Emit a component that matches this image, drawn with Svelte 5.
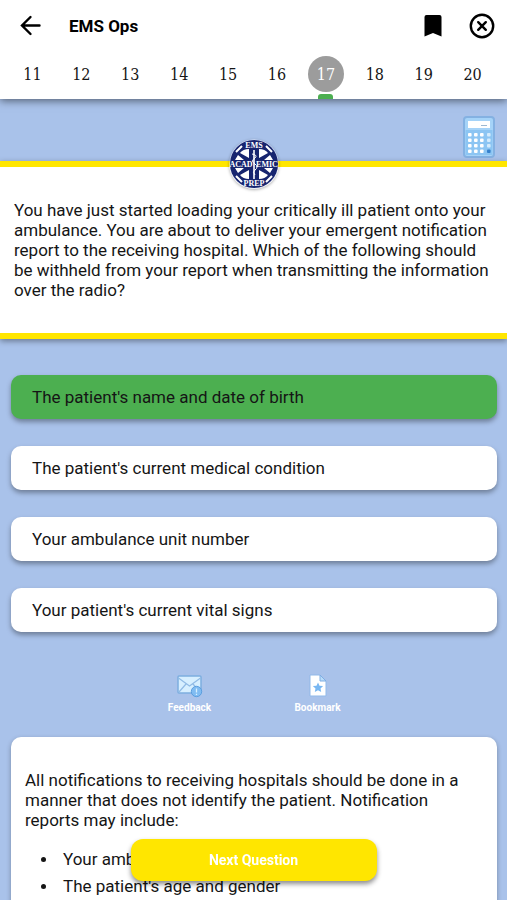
<script>
	const questions = [11, 12, 13, 14, 15, 16, 17, 18, 19, 20];

	const answers = [
		"The patient's name and date of birth",
		"The patient's current medical condition",
		"Your ambulance unit number",
		"Your patient's current vital signs",
	];

	const correct = 0;
	let current = $state(17);
	let selected = $state(0);

	function next() {
		if (current < questions[questions.length - 1]) current += 1;
	}
</script>

<div class="screen">
	<header>
		<div class="bar">
			<button class="icon-btn" aria-label="Back">
				<svg width="24" height="24" viewBox="0 0 24 24" class="line">
					<path d="M21.5 11.5H4M12.5 3L4 11.5L12.5 20" />
				</svg>
			</button>
			<h1>EMS Ops</h1>
			<button class="icon-btn" aria-label="Bookmark this question">
				<svg width="24" height="24" viewBox="0 0 24 24">
					<path d="M5.5 1h13a2 2 0 0 1 2 2v19.5l-8.5-3.5l-8.5 3.5V3a2 2 0 0 1 2-2z" />
				</svg>
			</button>
			<button class="icon-btn" aria-label="Close">
				<svg width="26" height="26" viewBox="0 0 26 26" class="line">
					<circle cx="13" cy="13" r="11.2" />
					<path d="M9.2 9.2l7.6 7.6M16.8 9.2l-7.6 7.6" />
				</svg>
			</button>
		</div>
		<nav>
			{#each questions as number}
				<button
					class="tab"
					class:active={current === number}
					onclick={() => (current = number)}
				>
					<span>{number}</span>
				</button>
			{/each}
		</nav>
	</header>

	<main>
		<div class="tools">
			<button class="icon-btn" aria-label="Calculator">
				<svg width="32" height="42" viewBox="0 0 32 42">
					<rect x="1" y="1" width="30" height="40" rx="3" fill="#a5d3f8" stroke="#84b1e2" stroke-width="2" />
					<path d="M2.5 14h27v25h-27z" fill="#8cc5f3" />
					<rect x="5" y="5" width="22" height="7" fill="#fff" />
					<path d="M18 9.5h6" stroke="#9db8d2" />
					{#each [0, 1, 2, 3] as row}
						{#each [5, 11, 17, 24] as x, col}
							<rect
								{x}
								y={17 + row * 5.5}
								width="3.6"
								height="3.6"
								rx="1"
								fill={col < 3 ? "#fff" : row === 3 ? "#3681cc" : "#d3ebfd"}
							/>
						{/each}
					{/each}
				</svg>
			</button>
		</div>

		<section class="question">
			<svg class="logo" width="50" height="50" viewBox="0 0 50 50" role="img" aria-label="EMS Academic Prep">
				<circle cx="25" cy="25" r="24.5" fill="#d9def0" />
				<circle cx="25" cy="25" r="24" fill="#17256f" />
				<!-- white gaps between the arms of the star -->
				<g fill="#fff">
					<path d="M20 10v9l-9-5q3-4 9-4zM30 10v9l9-5q-3-4-9-4z" />
					<path d="M20 40v-9l-9 5q3 4 9 4zM30 40v-9l9 5q-3 4-9 4z" />
					<path d="M9 16l6 5H6zM41 16l-6 5h9zM9 34l6-5H6zM41 34l-6-5h9z" />
				</g>
				<path d="M7 13l6-6M43 13l-6-6M7 37l6 6M43 37l-6 6" stroke="#fff" stroke-width="2" />
				<path d="M25 11v29" stroke="#fff" stroke-width="1.6" />
				<path d="M23 15q6 1 3 4q-5 3 0 6q4 3 0 6q-3 2 0 5" fill="none" stroke="#fff" />
				<text x="25" y="9" font-size="8">EMS</text>
				<text x="12" y="28" font-size="8">ACAD</text>
				<text x="38" y="28" font-size="8">EMIC</text>
				<text x="25" y="47" font-size="8">PREP</text>
			</svg>
			<p>
				You have just started loading your critically ill patient onto your
				ambulance. You are about to deliver your emergent notification report to
				the receiving hospital. Which of the following should be withheld from
				your report when transmitting the information over the radio?
			</p>
		</section>

		<div class="answers">
			{#each answers as answer, i}
				<button
					class="answer"
					class:correct={selected === i && i === correct}
					onclick={() => (selected = i)}
				>
					{answer}
				</button>
			{/each}
		</div>

		<div class="actions">
			<button class="action">
				<svg width="28" height="24" viewBox="0 0 28 24">
					<rect x="2" y="2" width="23" height="17" rx="1" fill="#d7efff" stroke="#7eaee0" stroke-width="1.5" />
					<path d="M2.5 4l11 8l11-8M3 18l7-8M24 18l-7-8" fill="none" stroke="#91bbe5" stroke-width="1.2" />
					<circle cx="20.5" cy="17.5" r="5.2" fill="#80bcf2" stroke="#5c9ede" />
					<path d="M20.5 14.5v4M20.5 19.7v1.3" stroke="#d7efff" stroke-width="1.3" />
				</svg>
				Feedback
			</button>
			<button class="action">
				<svg width="28" height="24" viewBox="0 0 28 24">
					<path d="M6 1h10l6 6v15H6z" fill="#fff" stroke="#91b9e9" />
					<path d="M16 1v6h6z" fill="#b9dcfa" stroke="#7faee3" />
					<path d="M14 8.5l1.5 3.2l3.6.4l-2.6 2.4l.7 3.5l-3.2-1.8l-3.2 1.8l.7-3.5l-2.6-2.4l3.6-.4z" fill="#78b7f2" />
				</svg>
				Bookmark
			</button>
		</div>

		<section class="explanation">
			<p>
				All notifications to receiving hospitals should be done in a manner that
				does not identify the patient. Notification reports may include:
			</p>
			<ul>
				<li>Your ambulance unit number</li>
				<li>The patient's age and gender</li>
			</ul>
		</section>
	</main>

	<button class="next" onclick={next}>Next Question</button>
</div>

<style>
	.screen {
		height: 100vh;
		display: flex;
		flex-direction: column;
		overflow: hidden;
		background: #a9c2ea;
		color: #151515;
		font-family: Roboto, sans-serif;
		font-size: 17px;
		line-height: 20px;
	}

	button {
		border: 0;
		padding: 0;
		background: none;
		color: inherit;
		font: inherit;
		cursor: pointer;
	}

	header {
		flex-shrink: 0;
		background: #fff;
		box-shadow: 0 2px 8px rgba(0, 0, 0, 0.5);
		z-index: 1;
	}

	.bar {
		display: flex;
		align-items: center;
		gap: 24px;
		height: 51px;
		padding: 0 12px 0 18px;
	}

	.icon-btn {
		display: flex;
	}

	.icon-btn .line {
		fill: none;
		stroke: #000;
		stroke-width: 2.4;
		stroke-linecap: round;
	}

	h1 {
		flex: 1;
		margin: 0 0 0 3px;
		color: #000;
		font-size: 17px;
		font-weight: 700;
	}

	nav {
		display: flex;
		height: 48px;
		padding: 0 10px 0 8px;
	}

	.tab {
		flex: 1;
		display: flex;
		flex-direction: column;
		align-items: center;
		justify-content: space-between;
		padding-top: 5px;
		font-family: "DejaVu Serif Condensed", "DejaVu Serif", serif;
		font-size: 16px;
	}

	.tab span {
		width: 36px;
		border-radius: 50%;
		line-height: 38px;
		height: 36px;
	}

	.tab.active span {
		background: #9c9c9c;
		color: #fff;
	}

	.tab.active::after {
		content: "";
		width: 15px;
		height: 5px;
		border-radius: 3px 3px 0 0;
		background: #4caf50;
	}

	main {
		flex: 1;
		min-height: 0;
		overflow-y: auto;
		scrollbar-width: none;
	}

	.tools {
		display: flex;
		justify-content: flex-end;
		padding: 17px 12px 3px;
	}

	.question {
		position: relative;
		padding: 33px 14px;
		border-top: 6px solid #ffe600;
		border-bottom: 6px solid #ffe600;
		background: #fff;
		box-shadow: 0 2px 6px rgba(0, 0, 0, 0.4);
	}

	.question p {
		margin: 0;
	}

	/* the badge straddles the upper yellow rule */
	.logo {
		position: absolute;
		top: -28px;
		left: 50%;
		transform: translateX(-50%);
		border-radius: 50%;
		box-shadow: 0 1px 3px rgba(0, 0, 0, 0.3);
	}

	.logo text {
		fill: #fff;
		font-family: "Liberation Serif", serif;
		font-weight: 700;
		text-anchor: middle;
	}

	.answers {
		display: flex;
		flex-direction: column;
		gap: 27px;
		padding: 36px 10px 36px 11px;
	}

	.answer {
		height: 44px;
		padding: 0 21px;
		border-radius: 10px;
		background: #fff;
		box-shadow: 0 3px 5px rgba(0, 0, 0, 0.35);
		text-align: left;
	}

	.answer.correct {
		background: #4caf50;
	}

	.actions {
		display: flex;
		justify-content: center;
		gap: 68px;
		padding-top: 6px;
	}

	.action {
		display: flex;
		flex-direction: column;
		align-items: center;
		gap: 4px;
		width: 60px;
		color: #fff;
		font-size: 10px;
		font-weight: 700;
		line-height: 12px;
	}

	.explanation {
		margin: 23px 10px 0 11px;
		padding: 33px 14px 80px;
		border-radius: 10px;
		background: #fff;
		box-shadow: 0 2px 5px rgba(0, 0, 0, 0.3);
	}

	.explanation p {
		margin: 0;
	}

	ul {
		display: flex;
		flex-direction: column;
		gap: 7px;
		margin: 19px 0 0;
		padding: 0 0 0 16px;
		list-style: none;
	}

	li {
		display: flex;
		align-items: center;
		gap: 17px;
	}

	li::before {
		content: "";
		width: 5px;
		height: 5px;
		border-radius: 50%;
		background: #151515;
	}

	.next {
		position: fixed;
		bottom: 19px;
		left: 50%;
		z-index: 2;
		width: 246px;
		height: 42px;
		transform: translateX(-50%);
		border-radius: 12px;
		background: #ffe600;
		box-shadow: 0 3px 5px rgba(0, 0, 0, 0.45);
		color: #fff;
		font-size: 14px;
		font-weight: 700;
	}
</style>
